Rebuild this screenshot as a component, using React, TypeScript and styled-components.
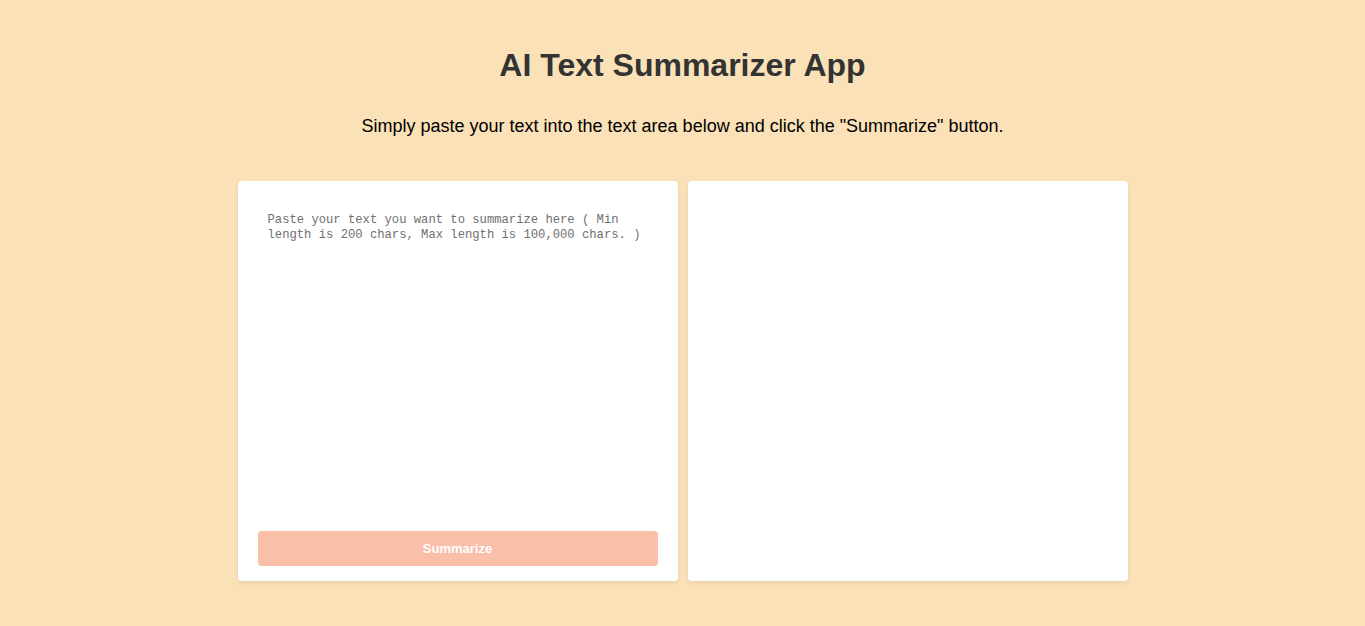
import styled, { createGlobalStyle } from "styled-components";

const GlobalStyle = createGlobalStyle`
  html, body {
    margin: 0;
    padding: 0;
    background: #fae1b7;
    font-family: "Liberation Sans", Arial, sans-serif;
  }
`;

const Page = styled.main`
  box-sizing: border-box;
  min-height: 626px;
  padding-top: 47px;
  display: flex;
  flex-direction: column;
  align-items: center;
`;

const Title = styled.h1`
  margin: 0 0 32px;
  font-size: 32px;
  font-weight: 700;
  color: #333;
`;

const Subtitle = styled.p`
  margin: 0 0 44px;
  font-size: 18px;
  color: #000;
`;

const Panels = styled.div`
  display: flex;
  gap: 10px;
`;

const Card = styled.section`
  box-sizing: border-box;
  width: 440px;
  height: 400px;
  background: #fff;
  border-radius: 4px;
  box-shadow: 0 2px 4px rgba(0, 0, 0, 0.08);
  display: flex;
  flex-direction: column;
  padding: 20px 20px 15px;
`;

const TextInput = styled.textarea`
  flex: 1;
  resize: none;
  border: none;
  outline: none;
  padding: 12px 10px 10px;
  font-family: "Liberation Mono", "DejaVu Sans Mono", monospace;
  font-size: 12.2px;
  line-height: 15px;
  color: #333;

  &::placeholder {
    color: #6f6f6f;
  }
`;

const SummarizeButton = styled.button`
  margin-top: 10px;
  height: 35px;
  border: none;
  border-radius: 4px;
  background: #f9bfa9;
  color: #fff;
  font-family: "Liberation Sans", Arial, sans-serif;
  font-size: 13px;
  font-weight: 700;
  cursor: pointer;
`;

function App() {
  return (
    <>
      <GlobalStyle />
      <Page>
        <Title>AI Text Summarizer App</Title>
        <Subtitle>
          Simply paste your text into the text area below and click the "Summarize" button.
        </Subtitle>
        <Panels>
          <Card>
            <TextInput placeholder="Paste your text you want to summarize here ( Min length is 200 chars, Max length is 100,000 chars. )" />
            <SummarizeButton disabled>Summarize</SummarizeButton>
          </Card>
          <Card />
        </Panels>
      </Page>
    </>
  );
}

export default App;
